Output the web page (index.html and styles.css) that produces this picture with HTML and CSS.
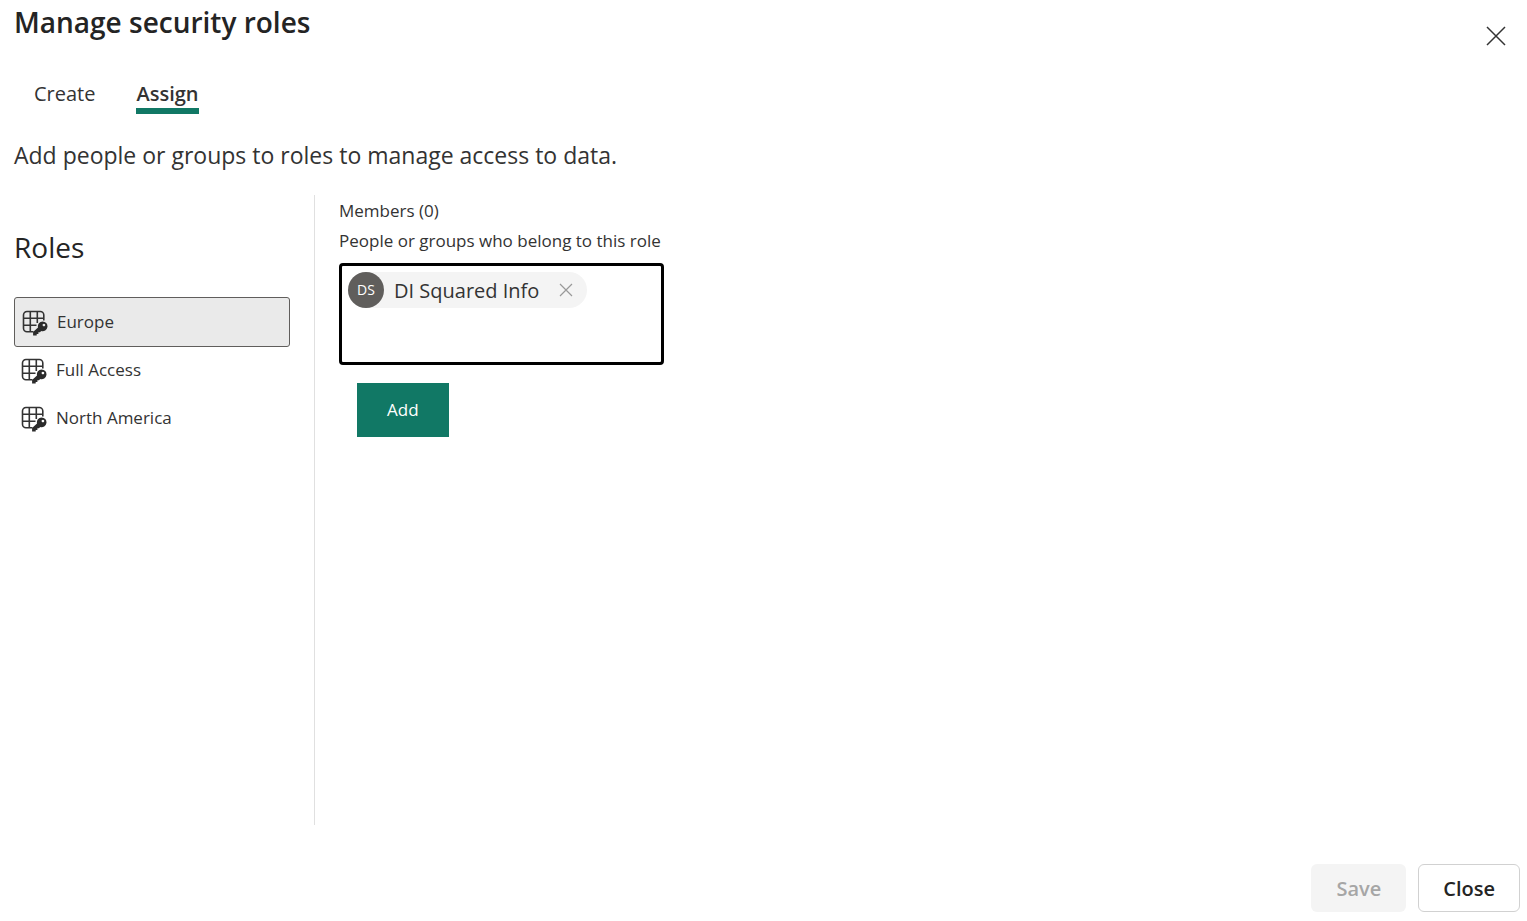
FILE: index.html
```html
<!DOCTYPE html>
<html lang="en">
<head>
    <meta charset="UTF-8">
    <meta name="viewport" content="width=device-width, initial-scale=1.0">
    <title>Manage security roles</title>
    <link rel="stylesheet" href="styles.css">
</head>
<body>
    <!-- Shared icon for every role in the list -->
    <svg class="icon-defs" aria-hidden="true">
        <symbol id="icon-role" viewBox="0 -4 26 30">
            <path d="M11.500 21.800H5A3.500 3.500 0 0 1 1.500 18.300V5A3.500 3.500 0 0 1 5 1.500H18.300A3.500 3.500 0 0 1 21.800 5V10.500M8.300 1.500V21.800M15.300 1.500V13M1.500 8.300H21.800M1.500 15.300H14.500" fill="none" stroke="#333" stroke-width="1.600"/>
            <path fill-rule="evenodd" fill="#2b2b2b" d="M20.600 11.400a4.900 4.900 0 1 1-1.400 9.600l-1.200 1.300h-1.600v1.700h-1.700v1.600h-3.600v-3.500l4.900-4.700a4.900 4.900 0 0 1 4.600-6zM21.900 13.700a1.300 1.300 0 1 0 .010 0z"/>
        </symbol>
    </svg>

    <main class="dialog">
        <header class="dialog-header">
            <h1>Manage security roles</h1>
            <button class="dismiss" type="button" aria-label="Close dialog">
                <svg width="20" height="20" viewBox="0 0 20 20">
                    <path d="M1 1L19 19M19 1L1 19" stroke="#333" stroke-width="1.500"/>
                </svg>
            </button>
        </header>

        <nav class="tabs" role="tablist">
            <button class="tab" type="button" role="tab" aria-selected="false">Create</button>
            <button class="tab active" type="button" role="tab" aria-selected="true">Assign</button>
        </nav>

        <p class="intro">Add people or groups to roles to manage access to data.</p>

        <div class="content">
            <section class="roles">
                <h2>Roles</h2>
                <ul class="role-list">
                    <li><button class="role selected" type="button"><svg class="role-icon"><use href="#icon-role"/></svg>Europe</button></li>
                    <li><button class="role" type="button"><svg class="role-icon"><use href="#icon-role"/></svg>Full Access</button></li>
                    <li><button class="role" type="button"><svg class="role-icon"><use href="#icon-role"/></svg>North America</button></li>
                </ul>
            </section>

            <section class="members">
                <p>Members (0)</p>
                <label for="memberInput">People or groups who belong to this role</label>
                <div class="picker">
                    <div class="chip">
                        <span class="avatar">DS</span>
                        <span class="chip-name">DI Squared Info</span>
                        <button class="chip-remove" type="button" aria-label="Remove DI Squared Info">
                            <svg width="14" height="14" viewBox="0 0 14 14">
                                <path d="M1 1L13 13M13 1L1 13" stroke="#999" stroke-width="1.200"/>
                            </svg>
                        </button>
                    </div>
                    <input type="text" id="memberInput" autocomplete="off">
                </div>
                <button class="add" type="button">Add</button>
            </section>
        </div>

        <footer class="dialog-footer">
            <button class="btn" type="button" disabled>Save</button>
            <button class="btn btn-outline" type="button">Close</button>
        </footer>
    </main>
</body>
</html>
```

FILE: styles.css
```css
* {
    box-sizing: border-box;
}
body {
    margin: 0;
    background: #fff;
    color: #333;
    font-family: "Segoe UI", "Open Sans", "Noto Sans", sans-serif;
    font-size: 17px;
}
button, input {
    font: inherit;
    color: inherit;
}
button {
    margin: 0;
    padding: 0;
    border: none;
    background: none;
    cursor: pointer;
}
h1, h2, p, ul {
    margin: 0;
    padding: 0;
}
svg {
    display: block;
}
.icon-defs {
    display: none;
}
.dialog {
    display: flex;
    flex-direction: column;
    min-height: 100vh;
    padding: 2px 7px 9px 14px;
}

/* Header and tabs */
.dialog-header {
    display: flex;
    justify-content: space-between;
    align-items: flex-start;
    height: 78px;
}
h1 {
    color: #242424;
    font-size: 28px;
    font-weight: 600;
    line-height: 40px;
}
.dismiss {
    padding: 24px 14px 14px;
}
.tabs {
    display: flex;
    gap: 41px;
    padding-left: 20px;
}
.tab {
    font-size: 20px;
    line-height: 28px;
    border-bottom: 6px solid transparent;
}
.tab.active {
    font-weight: 600;
    border-bottom-color: #117865;
}
.intro {
    margin: 25px 0 24px;
    font-size: 23px;
    line-height: 32px;
}

/* Role list */
.content {
    display: flex;
    flex: 1;
}
.roles {
    width: 301px;
    padding: 32px 24px 0 0;
    border-right: 1px solid #e0e0e0;
}
h2 {
    margin-bottom: 30px;
    color: #242424;
    font-size: 28px;
    font-weight: 400;
    line-height: 40px;
}
.role-list {
    list-style: none;
}
.role {
    display: flex;
    align-items: center;
    gap: 9px;
    width: 100%;
    height: 48px;
    padding: 0 7px 2px;
}
.role.selected {
    height: 50px;
    margin-bottom: -1px;
    background: #eaeaea;
    border: 1px solid #605e5c;
    border-radius: 3px;
}
.role-icon {
    width: 26px;
    height: 30px;
}

/* Members */
.members {
    display: flex;
    flex-direction: column;
    align-items: flex-start;
    padding: 1px 0 0 24px;
    line-height: 30px;
}
.picker {
    align-self: stretch;
    min-width: 325px;
    min-height: 102px;
    margin: 7px 0 18px;
    padding: 6px;
    border: 3px solid #000;
    border-radius: 4px;
}
.chip {
    display: inline-flex;
    align-items: center;
    height: 36px;
    padding-right: 14px;
    background: #f4f4f4;
    border-radius: 18px;
}
.avatar {
    width: 36px;
    height: 36px;
    border-radius: 50%;
    background: #605e5c;
    color: #fff;
    font-size: 14px;
    line-height: 36px;
    text-align: center;
}
.chip-name {
    margin: 0 20px 0 10px;
    padding-top: 2px;
    font-size: 20px;
}
.picker input {
    display: block;
    width: 100%;
    padding: 0;
    border: none;
    outline: none;
    background: none;
}
.add {
    margin-left: 18px;
    padding: 12px 30px;
    background: #117865;
    color: #fff;
    font-weight: 500;
}

/* Footer */
.dialog-footer {
    display: flex;
    justify-content: flex-end;
    gap: 12px;
    margin-top: 39px;
}
.btn {
    height: 48px;
    padding: 0 24px;
    border: 1px solid transparent;
    border-radius: 6px;
    color: #242424;
    font-size: 20px;
    font-weight: 600;
}
.btn-outline {
    background: #fff;
    border-color: #d1d1d1;
}
.btn:disabled {
    background: #f4f4f4;
    color: #a6a6a6;
    cursor: default;
}
```
